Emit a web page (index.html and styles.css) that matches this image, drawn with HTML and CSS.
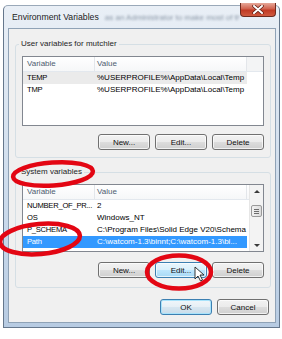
FILE: index.html
```html
<!DOCTYPE html>
<html lang="en">
  <head>
    <meta charset="UTF-8" />
    <title>Environment Variables</title>
    <link rel="stylesheet" href="styles.css">
  </head>
  <body>
    <div class="window">
      <div class="titlebar">
        <span class="title">Environment Variables</span>
        <span class="behind">as an Administrator to make most of the</span>
        <span class="close">
          <svg width="12" height="9" viewBox="0 0 12 9">
            <path d="M2 1 L10 8 M10 1 L2 8" stroke="#5a1a10" stroke-width="3.4" stroke-linecap="round" />
            <path d="M2 1 L10 8 M10 1 L2 8" stroke="#fff" stroke-width="2" stroke-linecap="round" />
          </svg>
        </span>
      </div>

      <div class="client">
        <div class="group user">
          <span class="group-label">User variables for mutchler</span>
          <div class="list short">
            <div class="list-body">
              <div class="row head">
                <span class="c1">Variable</span><span class="c2">Value</span><span class="filler"></span>
              </div>
              <div class="row dim">
                <span class="c1">TEMP</span><span class="c2">%USERPROFILE%\AppData\Local\Temp</span>
              </div>
              <div class="row">
                <span class="c1">TMP</span><span class="c2">%USERPROFILE%\AppData\Local\Temp</span>
              </div>
            </div>
          </div>
          <div class="buttons">
            <button>New...</button>
            <button>Edit...</button>
            <button>Delete</button>
          </div>
        </div>

        <div class="group system">
          <span class="group-label">System variables</span>
          <div class="list">
            <div class="list-body">
              <div class="row head">
                <span class="c1">Variable</span><span class="c2">Value</span>
              </div>
              <div class="row">
                <span class="c1">NUMBER_OF_PR...</span><span class="c2">2</span>
              </div>
              <div class="row">
                <span class="c1">OS</span><span class="c2">Windows_NT</span>
              </div>
              <div class="row">
                <span class="c1">P_SCHEMA</span><span class="c2">C:\Program Files\Solid Edge V20\Schema</span>
              </div>
              <div class="row selected">
                <span class="c1">Path</span><span class="c2">C:\watcom-1.3\binnt;C:\watcom-1.3\bi...</span>
              </div>
              <div class="row">
                <span class="c1">PATHEXT</span><span class="c2">.COM;.EXE;.BAT;.CMD;.VBS;.VBE;.JS</span>
              </div>
            </div>
            <div class="scrollbar">
              <div class="sb-btn"><span class="arrow up"></span></div>
              <div class="sb-track"><div class="sb-thumb"><i></i><i></i><i></i></div></div>
              <div class="sb-btn"><span class="arrow down"></span></div>
            </div>
          </div>
          <div class="buttons">
            <button>New...</button>
            <button class="hover">Edit...</button>
            <button>Delete</button>
          </div>
        </div>

        <div class="buttons footer">
          <button class="default">OK</button>
          <button>Cancel</button>
        </div>
      </div>
    </div>

    <svg class="marks" width="282" height="339" viewBox="0 0 282 339">
      <g fill="none" stroke="#e30613" stroke-width="4.5">
        <ellipse cx="53" cy="174" rx="40" ry="11.5" transform="rotate(-4 53 174)" />
        <ellipse cx="40" cy="239" rx="40" ry="15" transform="rotate(-5 40 239)" />
        <ellipse cx="179" cy="272" rx="32" ry="16.5" />
      </g>
      <path d="M195 267 L195 279 L198 276 L200.5 281 L202.5 280 L200 275 L204 275 Z" fill="#fff" stroke="#222" stroke-width="0.9" stroke-linejoin="round" />
    </svg>
  </body>
</html>
```

FILE: styles.css
```css
body {
  margin: 0;
  background: #fff;
  font-family: "Liberation Sans", Arial, sans-serif;
  font-size: 8px;
  color: #000;
}

.window {
  width: 268px;
  margin: 5px 0 0 3px;
  padding: 0 3px 4px 4px;
  background: linear-gradient(#e9eff6, #c8d8ea 70%, #b7cbe2);
  border: 1px solid #65778c;
  border-top-color: #9aa9b9;
  border-radius: 5px 5px 0 0;
}

.titlebar {
  height: 22px;
  display: flex;
  align-items: flex-start;

  .title {
    font-size: 8.7px;
    color: #1c1c1c;
    margin: 6px 0 0 4px;
    white-space: nowrap;
  }

  .behind {
    flex: 1;
    margin: 7px 0 0 6px;
    font-size: 8px;
    color: #8a97a6;
    filter: blur(1.2px);
    white-space: nowrap;
    overflow: hidden;
  }

  .close {
    width: 36px;
    height: 14px;
    margin: -3px 0 0 0;
    display: flex;
    justify-content: center;
    align-items: center;
    background: linear-gradient(#e7a899, #d0624e 45%, #c13a24 55%, #cf5a3f);
    border: 1px solid #6e2a1e;
    border-top: 0;
    border-radius: 0 0 4px 4px;
    box-sizing: border-box;
  }
}

.client {
  background: #f0f0f0;
  border: 1px solid #8fa2b6;
  padding: 0 6px 7px 6px;
}

.group {
  border: 1px solid #d5dfe5;
  border-radius: 3px;
  padding: 0 6px 7px 6px;
  margin-right: -2px;
  display: flex;
  flex-direction: column;

  &.user {
    margin-top: 15px;
  }

  &.system {
    margin-top: 14px;
    padding-bottom: 9px;

    .buttons {
      margin-top: 10px;
    }
  }
}

.group-label {
  align-self: flex-start;
  line-height: 10px;
  margin: -6px 0 0 -3px;
  padding: 0 2px;
  background: #f0f0f0;
  color: #1e1e1e;
}

.list {
  margin-top: 7px;
  height: 66px;
  border: 1px solid #828790;
  background: #fff;
  display: flex;
  overflow: hidden;

  &.short {
    height: 68px;
  }
}

.list-body {
  flex: 1;
  overflow: hidden;
}

.row {
  display: flex;
  height: 12px;
  line-height: 12px;
  white-space: nowrap;

  span {
    overflow: hidden;
  }

  .c1 {
    width: 72px;
    padding-left: 4px;
    box-sizing: border-box;
    flex-shrink: 0;
    font-size: 7.6px;
    letter-spacing: -0.25px;
  }

  .c2 {
    width: 152px;
    padding-left: 2px;
    box-sizing: border-box;
    flex-shrink: 0;
  }

  &.head {
    height: 14px;
    line-height: 14px;
    color: #4d5d70;
    border-bottom: 1px solid #e3e8ee;
    background: linear-gradient(#fff, #f6f7f8);

    .c1 {
      border-right: 1px solid #e3e6ea;
      font-size: 8px;
      letter-spacing: 0;
    }

    .c2 {
      border-right: 1px solid #e3e6ea;
    }

    .filler {
      flex: 1;
      background: #f3f4f5;
    }
  }

  &.dim {
    width: 224px;
    background: #ebebeb;
  }

  &.selected {
    width: 224px;
    background: #3399ff;
    color: #fff;
  }
}

.scrollbar {
  width: 13px;
  background: #f3f3f3;
  border-left: 1px solid #e6e6e6;
  display: flex;
  flex-direction: column;
}

.sb-btn {
  height: 12px;
  display: flex;
  justify-content: center;
  align-items: center;
}

.arrow {
  width: 0;
  height: 0;
  border-left: 3px solid transparent;
  border-right: 3px solid transparent;

  &.up {
    border-bottom: 3px solid #3a3a3a;
  }

  &.down {
    border-top: 3px solid #3a3a3a;
  }
}

.sb-track {
  flex: 1;
  padding-top: 8px;
}

.sb-thumb {
  height: 12px;
  margin: 0 1px;
  border: 1px solid #9a9a9a;
  border-radius: 2px;
  background: linear-gradient(90deg, #f2f2f2, #dcdcdc);
  box-sizing: border-box;
  display: flex;
  flex-direction: column;
  justify-content: center;
  align-items: center;
  gap: 1px;

  i {
    width: 5px;
    height: 1px;
    background: #6c6c6c;
  }
}

.buttons {
  display: flex;
  justify-content: flex-end;
  gap: 5px;
  margin-top: 8px;

  button {
    width: 52px;
    height: 16px;
    padding: 0;
    font-family: inherit;
    font-size: 8px;
    color: #111;
    border: 1px solid #707070;
    border-radius: 3px;
    background: linear-gradient(#f2f2f2 0%, #ebebeb 50%, #dddddd 51%, #cfcfcf 100%);
    box-shadow: inset 0 0 0 1px rgba(255, 255, 255, 0.7);

    &.hover {
      border-color: #3c7fb1;
      background: linear-gradient(#eaf6fd 0%, #d9f0fc 50%, #bee6fd 51%, #a7d9f5 100%);
    }

    &.default {
      border-color: #3c7fb1;
      background: linear-gradient(#f0f6fa 0%, #e6eff5 50%, #d7e6f0 51%, #c9dcea 100%);
      box-shadow: inset 0 0 0 1px #a8e3fb;
    }
  }

  &.footer {
    margin-top: 11px;
    gap: 5px;
  }
}

.marks {
  position: absolute;
  left: 0;
  top: 0;
  pointer-events: none;
}
```
